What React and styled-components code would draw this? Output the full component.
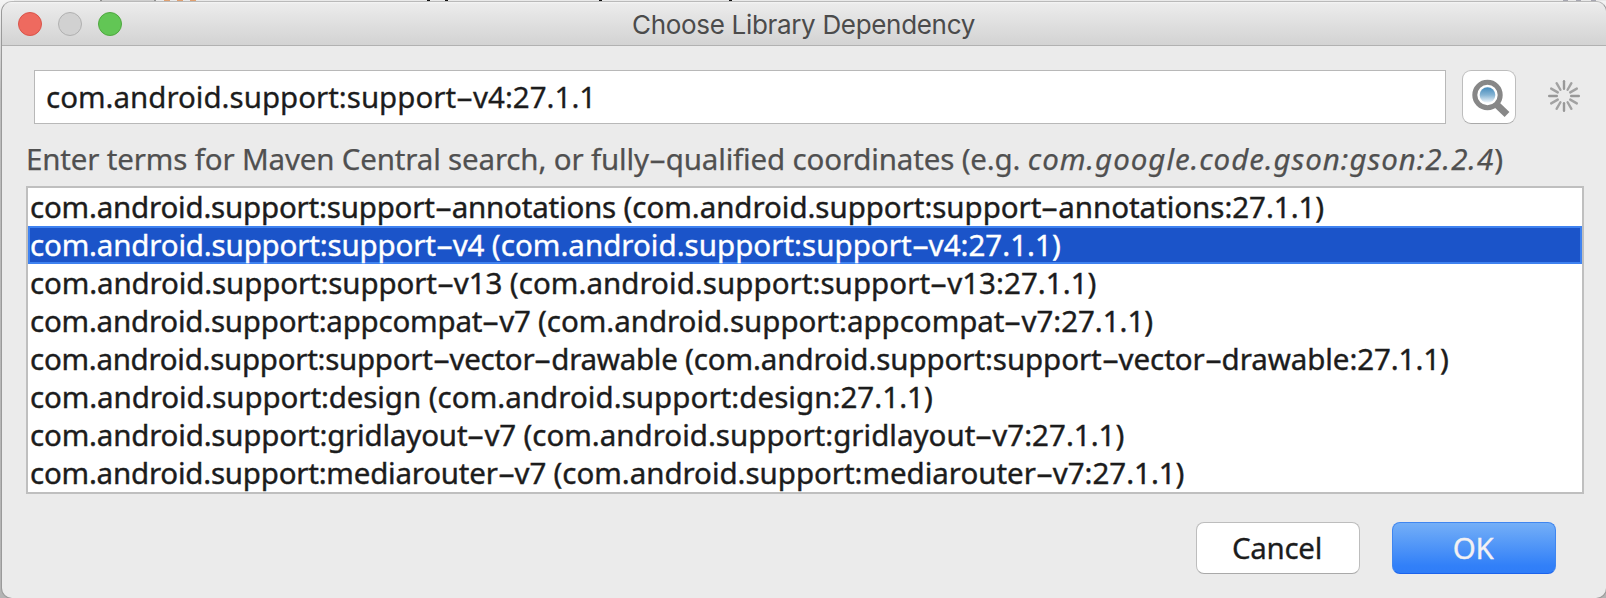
import React from "react";
import styled, { createGlobalStyle } from "styled-components";

const GlobalStyle = createGlobalStyle`
  *, *::before, *::after { box-sizing: border-box; }
  body { margin: 0; overflow: hidden; background: #c4c4c4; }
`;

const Desktop = styled.div`
  position: relative;
  height: 598px;
  padding: 1px 0 0 1px;
  overflow: hidden;
  background: linear-gradient(#f4f4f4 0, #e9e9e9 20px, #bcbcbc 90px, #b4b4b4 100%);
  font-family: "Noto Sans", "Lucida Grande", sans-serif;
  font-size: 29.5px;
  color: #1c1c1c;
`;

const Backdrop = styled.svg`
  position: absolute;
  top: 0;
  left: 0;
  display: block;
`;

const Window = styled.main`
  position: relative;
  display: flex;
  flex-direction: column;
  width: 1606px;
  height: 598px;
  border: 1px solid #9a9a9a;
  border-top-color: #b9b9b9;
  border-radius: 11px;
  background: #ebebeb;
  overflow: hidden;
`;

const TitleBar = styled.header`
  display: grid;
  grid-template-columns: 120px 1fr 120px;
  align-items: center;
  flex: none;
  height: 44px;
  padding: 0 16px;
  background: linear-gradient(#f5f5f5 0, #ebebeb 2px, #d3d3d3 100%);
  border-bottom: 1px solid #b1b1b1;
`;

const Lights = styled.div`
  display: flex;
  gap: 16px;
`;

const Light = styled.i`
  width: 24px;
  height: 24px;
  border-radius: 50%;
  border: 1px solid ${(p) => p.$edge};
  background: ${(p) => p.$fill};
`;

const Title = styled.h1`
  margin: 0;
  text-align: center;
  font: 400 26px/30px Inter, sans-serif;
  letter-spacing: -0.32px;
  color: #4b4b4b;
  padding: 3px 1px 0 0;
`;

const SearchRow = styled.div`
  display: flex;
  align-items: center;
  height: 54px;
  margin: 24px 0 0 32px;
`;

const Field = styled.div`
  width: 1412px;
  height: 54px;
  padding-left: 11px;
  border: 1px solid #b8b8b8;
  background: #fff;
  line-height: 51px;
  white-space: pre;
  -webkit-text-stroke: 0.3px;
`;

const IconButton = styled.button`
  display: flex;
  width: 54px;
  height: 54px;
  margin: 0 32px 0 16px;
  padding: 0;
  border: 1px solid #bdbdbd;
  border-bottom-color: #a9a9a9;
  border-radius: 9px;
  background: #fff;
`;

const Hint = styled.p`
  margin: 14px 0 0 24px;
  height: 48px;
  line-height: 42px;
  letter-spacing: -0.16px;
  white-space: pre;
  color: #505050;
  -webkit-text-stroke: 0.25px;

  em { letter-spacing: 0.98px; }
`;

const Results = styled.ul`
  flex: none;
  width: 1558px;
  margin: 0 0 0 24px;
  padding: 0;
  border: 2px solid #bfbfbf;
  background: #fff;
  list-style: none;
`;

const Result = styled.li`
  display: flex;
  align-items: center;
  height: 38px;
  border: 2px solid ${(p) => (p.$selected ? "#3f82f0" : "transparent")};
  background: ${(p) => (p.$selected ? "#1b54c9" : "transparent")};
  color: ${(p) => (p.$selected ? "#fff" : "#1c1c1c")};
  line-height: 34px;
  white-space: pre;
  -webkit-text-stroke: 0.4px;
`;

const Tracked = styled.span`
  letter-spacing: ${(p) => p.$tracking || 0}px;
`;

const Dash = styled.span`
  display: inline-block;
  width: 17px;
  text-align: center;
  letter-spacing: 0;
  transform: scaleX(1.85);
`;

const Actions = styled.footer`
  display: flex;
  justify-content: flex-end;
  gap: 32px;
  margin: 28px 50px 0 0;
`;

const Button = styled.button`
  width: 164px;
  height: 52px;
  padding: 0 2px 0 0;
  border: 1px solid ${(p) => (p.$primary ? "#3f86f0" : "#bdbdbd")};
  border-bottom-color: ${(p) => (p.$primary ? "#1c63ec" : "#a9a9a9")};
  border-radius: 8px;
  background: ${(p) => (p.$primary ? "linear-gradient(#74aff7 0, #3280f8 85%, #2f7df8 100%)" : "#fff")};
  color: ${(p) => (p.$primary ? "#f3f1f3" : "#1c1c1c")};
  font: inherit;
  line-height: 50px;
  letter-spacing: -0.3px;
  -webkit-text-stroke: 0.3px;
`;

const results = [
  { artifact: "support-annotations", tracking: [-0.2, -0.04] },
  { artifact: "support-v4", tracking: [-0.16, 0.03] },
  { artifact: "support-v13", tracking: [-0.12, 0.05] },
  { artifact: "appcompat-v7", tracking: [-0.22, -0.03] },
  { artifact: "support-vector-drawable", tracking: [-0.28, -0.08] },
  { artifact: "design", tracking: [-0.1, 0.05] },
  { artifact: "gridlayout-v7", tracking: [-0.18, 0.01] },
  { artifact: "mediarouter-v7", tracking: [-0.22, -0.03] },
];

function Dashed({ children, tracking }) {
  return (
    <Tracked $tracking={tracking}>
      {children.split("-").map((part, i) => (
        <React.Fragment key={i}>
          {i > 0 && <Dash>-</Dash>}
          {part}
        </React.Fragment>
      ))}
    </Tracked>
  );
}

function EditorEdge() {
  return (
    <Backdrop width="1606" height="2">
      <rect x="14" width="1592" height="1" fill="#e9e9e9" />
      <rect x="100" width="56" height="2" fill="#cfcfcf" />
      <path d="M101 0v2M155 0v2" stroke="#909090" strokeWidth="2" />
      <path d="M164 .5h6M177 .5h6M190 .5h6" stroke="#e0a070" />
      <path d="M427 1h3M445 1h3M599 1h3M729 1h3" stroke="#111" strokeWidth="2" />
      <path d="M1563 .5h5M1576 .5h5M1591 .5h5" stroke="#a6a6b0" />
    </Backdrop>
  );
}

function Magnifier() {
  return (
    <svg width="52" height="52" viewBox="0 0 52 52">
      <defs>
        <linearGradient id="lens" x1="0" y1="0" x2="0" y2="1">
          <stop offset="0" stopColor="#438abb" />
          <stop offset=".5" stopColor="#86b4d4" />
          <stop offset="1" stopColor="#f4f8fb" />
        </linearGradient>
      </defs>
      <path d="M32 32L44 43.5" stroke="#878787" strokeWidth="7" />
      <circle cx="24.5" cy="24" r="12.7" fill="#fff" stroke="#878787" strokeWidth="5" />
      <circle cx="24.5" cy="24" r="7.8" fill="url(#lens)" />
    </svg>
  );
}

function Spinner() {
  return (
    <svg width="32" height="34" viewBox="-16 -16 32 34">
      {Array.from({ length: 12 }, (_, i) => (
        <path
          key={i}
          d="M0 -7.2V-14.8"
          stroke={i % 3 === 0 ? "#989898" : "#a2a2a2"}
          strokeWidth="2.4"
          strokeLinecap="round"
          transform={`rotate(${i * 30})`}
        />
      ))}
    </svg>
  );
}

export default function App() {
  return (
    <Desktop>
      <GlobalStyle />
      <EditorEdge />
      <Window>
        <TitleBar>
          <Lights>
            <Light $fill="#ee6a5f" $edge="#d9544a" />
            <Light $fill="#d1d1d1" $edge="#b0b0b0" />
            <Light $fill="#62c655" $edge="#4fa73f" />
          </Lights>
          <Title>Choose Library Dependency</Title>
        </TitleBar>
        <SearchRow>
          <Field>
            <Dashed>com.android.support:support-v4:27.1.1</Dashed>
          </Field>
          <IconButton aria-label="Search">
            <Magnifier />
          </IconButton>
          <Spinner />
        </SearchRow>
        <Hint>
          <Dashed tracking={-0.16}>
            {"Enter terms for Maven Central search, or fully-qualified coordinates (e.g. "}
          </Dashed>
          <em>com.google.code.gson:gson:2.2.4</em>)
        </Hint>
        <Results>
          {results.map(({ artifact, tracking }) => (
            <Result key={artifact} $selected={artifact === "support-v4"}>
              <Dashed tracking={tracking[0]}>{`com.android.support:${artifact} `}</Dashed>
              <Dashed tracking={tracking[1]}>{`(com.android.support:${artifact}:27.1.1)`}</Dashed>
            </Result>
          ))}
        </Results>
        <Actions>
          <Button>Cancel</Button>
          <Button $primary>OK</Button>
        </Actions>
      </Window>
    </Desktop>
  );
}
